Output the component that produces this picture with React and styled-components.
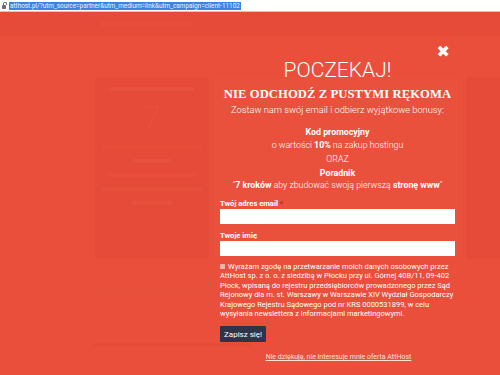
import React from "react";
import styled, { createGlobalStyle } from "styled-components";

const Global = createGlobalStyle`
  html, body { margin: 0; padding: 0; }
  body { width: 500px; height: 375px; overflow: hidden; font-family: Roboto, "Liberation Sans", sans-serif; background: #e94f3b; }
`;

const Frame = styled.div`
  width: 500px;
  height: 375px;
  display: flex;
  flex-direction: column;
  overflow: hidden;
`;

const UrlBar = styled.div`
  height: 11px;
  flex: none;
  background: #fff;
  border-bottom: 1px solid #c9c9d4;
  display: flex;
  align-items: center;
  padding-left: 2px;
  gap: 3px;
`;

const Lock = styled.span`
  width: 4px;
  height: 4px;
  background: #6b6b6b;
  border-radius: 1px;
  position: relative;
  margin-top: 2px;
  &::before {
    content: "";
    position: absolute;
    left: 0.5px;
    top: -3px;
    width: 2px;
    height: 2px;
    border: 1px solid #6b6b6b;
    border-bottom: none;
    border-radius: 2px 2px 0 0;
  }
`;

const UrlText = styled.span`
  background: #3b84e4;
  color: #eaf1ff;
  font-size: 6.4px;
  line-height: 8px;
  padding: 0 1px;
  white-space: nowrap;
`;

const Page = styled.div`
  flex: 1;
  position: relative;
  background: #e94f3b;
  overflow: hidden;
`;

const Nav = styled.div`
  height: 24px;
  background: #e54b38;
  display: flex;
  align-items: center;
  padding-left: 100px;
  gap: 12px;
`;

const FaintBar = styled.span`
  display: block;
  height: 4px;
  width: ${(p) => p.w}px;
  background: ${(p) => p.c || "#e7513d"};
`;

const Content = styled.div`
  display: grid;
  grid-template-columns: 113px 250px 113px;
  gap: 4px;
  padding: 41px 0 0 95px;
`;

const Card = styled.div`
  height: 182px;
  background: #e64b39;
  display: flex;
  flex-direction: column;
  align-items: center;
  padding-top: 10px;
  gap: 10px;
  box-sizing: border-box;
`;

const MidPanel = styled.div`
  height: 182px;
  background: #ea513d;
`;

const BigNum = styled.span`
  font-size: 34px;
  font-weight: 300;
  color: #e8503c;
  line-height: 34px;
`;

const Below = styled.div`
  padding: 30px 0 0 92px;
  display: flex;
  flex-direction: column;
  gap: 50px;
`;

const Modal = styled.div`
  position: absolute;
  left: 216px;
  top: 30px;
  width: 243px;
  display: flex;
  flex-direction: column;
  align-items: center;
  color: #fff;
`;

const Close = styled.span`
  position: absolute;
  right: 9px;
  top: 2px;
  font-size: 16px;
  font-weight: 700;
  font-family: "DejaVu Sans", sans-serif;
  line-height: 16px;
  color: #fff;
`;

const Title = styled.div`
  margin-top: 17px;
  font-size: 21px;
  font-weight: 300;
  line-height: 22px;
`;

const Slab = styled.div`
  margin-top: 5px;
  font-family: "Liberation Serif", serif;
  font-weight: 700;
  font-size: 12.6px;
  line-height: 16px;
  letter-spacing: 0.1px;
  white-space: nowrap;
`;

const Lead = styled.div`
  font-size: 9.3px;
  font-weight: 300;
  line-height: 12px;
  margin-top: 2px;
`;

const Bonus = styled.div`
  font-size: 8.8px;
  font-weight: 300;
  line-height: 12.5px;
  text-align: center;
  margin-top: ${(p) => p.mt}px;
  b { font-weight: 700; }
`;

const Form = styled.form`
  align-self: stretch;
  display: flex;
  flex-direction: column;
  padding: 0 4px;
  margin-top: 7px;
`;

const Label = styled.label`
  font-size: 7.6px;
  font-weight: 700;
  line-height: 10px;
  color: #fff;
  span { color: #c0281c; }
`;

const Input = styled.input`
  height: 15px;
  border: none;
  padding: 0;
  margin: 0 0 ${(p) => p.mb}px;
  background: #fff;
  display: block;
`;

const Consent = styled.p`
  margin: 6px 0 0;
  font-size: 7.5px;
  line-height: 9.6px;
  color: #fff;
  font-weight: 400;
`;

const Box = styled.span`
  display: inline-block;
  width: 5px;
  height: 5px;
  background: #f2b0a6;
  margin-right: 3px;
`;

const Submit = styled.button`
  align-self: flex-start;
  margin-top: 7px;
  background: #2f3448;
  color: #fff;
  border: none;
  border-radius: 1px;
  height: 16px;
  padding: 0 4px;
  font-family: Roboto, sans-serif;
  font-size: 8px;
`;

const Decline = styled.a`
  margin-top: 10px;
  font-size: 7px;
  line-height: 10px;
  color: #fbe1dc;
  text-decoration: underline;
  margin-left: 2px;
`;

export default function App() {
  return (
    <Frame>
      <Global />
      <UrlBar>
        <Lock />
        <UrlText>atthost.pl/?utm_source=partner&amp;utm_medium=link&amp;utm_campaign=client-11102</UrlText>
      </UrlBar>
      <Page>
        <Nav>
          <FaintBar w={90} c="#e74f3b" />
        </Nav>
        <Content>
          <Card>
            <FaintBar w={85} c="#e8513c" />
            <BigNum>7</BigNum>
            <FaintBar w={100} c="#e74f3b" />
            <FaintBar w={40} c="#e8513c" />
            <FaintBar w={90} c="#e74f3b" />
            <FaintBar w={100} c="#e8513c" />
            <FaintBar w={40} c="#e8513c" />
          </Card>
          <MidPanel />
          <Card />
        </Content>
        <Below>
          <FaintBar w={120} c="#e7513d" />
          <FaintBar w={160} c="#e54c3a" />
        </Below>
        <Modal>
          <Close>✖</Close>
          <Title>POCZEKAJ!</Title>
          <Slab>NIE ODCHODŹ Z PUSTYMI RĘKOMA</Slab>
          <Lead>Zostaw nam swój email i odbierz wyjątkowe bonusy:</Lead>
          <Bonus mt={10}>
            <b>Kod promocyjny</b>
            <br />o wartości <b>10%</b> na zakup hostingu
          </Bonus>
          <Bonus mt={2}>ORAZ</Bonus>
          <Bonus mt={1}>
            <b>Poradnik</b>
            <br />“<b>7 kroków</b> aby zbudować swoją pierwszą <b>stronę www</b>”
          </Bonus>
          <Form onSubmit={(e) => e.preventDefault()}>
            <Label>
              Twój adres email <span>*</span>
            </Label>
            <Input type="email" mb={7} />
            <Label>Twoje imię</Label>
            <Input type="text" mb={0} />
            <Consent>
              <Box />
              Wyrażam zgodę na przetwarzanie moich danych osobowych przez AttHost sp. z o. o. z siedzibą w Płocku przy ul. Górnej 40B/11, 09-402 Płock, wpisaną do rejestru przedsiębiorców prowadzonego przez Sąd Rejonowy dla m. st. Warszawy w Warszawie XIV Wydział Gospodarczy Krajowego Rejestru Sądowego pod nr KRS 0000531899, w celu wysyłania newslettera z informacjami marketingowymi.
            </Consent>
            <Submit type="submit">Zapisz się!</Submit>
          </Form>
          <Decline href="#">Nie dziękuję, nie interesuje mnie oferta AttHost</Decline>
        </Modal>
      </Page>
    </Frame>
  );
}
